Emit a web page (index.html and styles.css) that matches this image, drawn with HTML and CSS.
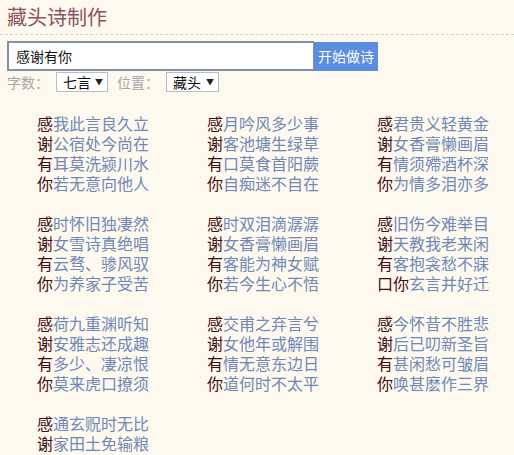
FILE: index.html
```html
<!DOCTYPE html>
<html lang="zh">
<head>
<meta charset="utf-8">
<title>藏头诗制作</title>
<link rel="stylesheet" href="styles.css">
</head>
<body>
<div class="page">
  <h1 class="title">藏头诗制作</h1>
  <div class="search">
    <input class="search-input" type="text" value="感谢有你">
    <button class="search-btn" type="button">开始做诗</button>
  </div>
  <div class="options">
    <span class="label">字数：</span>
    <span class="select sel-num">七言<span class="arrow">▼</span></span>
    <span class="label">位置：</span>
    <span class="select sel-pos">藏头<span class="arrow">▼</span></span>
  </div>
  <div class="poems">
    <div class="poem">
      <div><b>感</b>我此言良久立</div>
      <div><b>谢</b>公宿处今尚在</div>
      <div><b>有</b>耳莫洗颍川水</div>
      <div><b>你</b>若无意向他人</div>
    </div>
    <div class="poem">
      <div><b>感</b>月吟风多少事</div>
      <div><b>谢</b>客池塘生绿草</div>
      <div><b>有</b>口莫食首阳蕨</div>
      <div><b>你</b>自痴迷不自在</div>
    </div>
    <div class="poem">
      <div><b>感</b>君贵义轻黄金</div>
      <div><b>谢</b>女香膏懒画眉</div>
      <div><b>有</b>情须殢酒杯深</div>
      <div><b>你</b>为情多泪亦多</div>
    </div>
    <div class="poem">
      <div><b>感</b>时怀旧独凄然</div>
      <div><b>谢</b>女雪诗真绝唱</div>
      <div><b>有</b>云骛、骖风驭</div>
      <div><b>你</b>为养家子受苦</div>
    </div>
    <div class="poem">
      <div><b>感</b>时双泪滴潺潺</div>
      <div><b>谢</b>女香膏懒画眉</div>
      <div><b>有</b>客能为神女赋</div>
      <div><b>你</b>若今生心不悟</div>
    </div>
    <div class="poem">
      <div><b>感</b>旧伤今难举目</div>
      <div><b>谢</b>天教我老来闲</div>
      <div><b>有</b>客抱衾愁不寐</div>
      <div><b>口你</b>玄言并好迁</div>
    </div>
    <div class="poem">
      <div><b>感</b>荷九重渊听知</div>
      <div><b>谢</b>安雅志还成趣</div>
      <div><b>有</b>多少、凄凉恨</div>
      <div><b>你</b>莫来虎口撩须</div>
    </div>
    <div class="poem">
      <div><b>感</b>交甫之弃言兮</div>
      <div><b>谢</b>女他年或解围</div>
      <div><b>有</b>情无意东边日</div>
      <div><b>你</b>道何时不太平</div>
    </div>
    <div class="poem">
      <div><b>感</b>今怀昔不胜悲</div>
      <div><b>谢</b>后已叨新圣旨</div>
      <div><b>有</b>甚闲愁可皱眉</div>
      <div><b>你</b>唤甚麽作三界</div>
    </div>
    <div class="poem">
      <div><b>感</b>通玄贶时无比</div>
      <div><b>谢</b>家田土免输粮</div>
    </div>
  </div>
</div>
</body>
</html>
```

FILE: styles.css
```css
html, body {
  margin: 0;
  padding: 0;
  background: #fef9ee;
}
body {
  font-family: "Noto Sans CJK SC", "Noto Sans", sans-serif;
  color: #333;
}
.page {
  width: 514px;
  overflow: hidden;
}
.title {
  margin: 0;
  padding: 4px 0 0 7px;
  height: 35px;
  box-sizing: border-box;
  font-size: 20px;
  line-height: 26px;
  font-weight: normal;
  color: #8a5262;
  border-bottom: 1px dashed #d9d2c4;
}
.search {
  display: flex;
  align-items: flex-start;
  margin: 6px 0 0 7px;
  height: 30px;
}
.search-input {
  box-sizing: border-box;
  width: 307px;
  height: 30px;
  margin: 0;
  padding: 0 0 0 7px;
  border: 2px solid #8290a6;
  border-right-width: 1px;
  background: #fff;
  font-family: "Noto Sans CJK SC", sans-serif;
  font-size: 14px;
  color: #111;
  outline: none;
}
.search-btn {
  box-sizing: border-box;
  width: 64px;
  height: 29px;
  margin: 1px 0 0 0;
  padding: 0;
  border: none;
  background: #5b8de0;
  color: #fff;
  font-family: "Noto Sans CJK SC", sans-serif;
  font-size: 14px;
  line-height: 29px;
}
.options {
  display: flex;
  align-items: center;
  height: 22px;
  margin-left: 7px;
  font-size: 14px;
}
.label {
  color: #a6a6a6;
  width: 49px;
}
.label + .select + .label {
  margin-left: 9px;
}
.select {
  box-sizing: border-box;
  display: flex;
  align-items: center;
  justify-content: space-between;
  height: 20px;
  width: 52px;
  padding: 0 4px 0 6px;
  border: 1px solid #b8bcc4;
  background: #fff;
  color: #111;
  font-size: 14px;
  line-height: 18px;
}
.sel-pos {
  width: 53px;
}
.arrow {
  font-size: 8px;
  color: #222;
}
.poems {
  display: grid;
  grid-template-columns: 170px 170px 1fr;
  row-gap: 20px;
  padding: 20px 0 0 37px;
}
.poem {
  font-size: 16px;
  line-height: 20px;
  color: #6e88b8;
  white-space: nowrap;
}
.poem b {
  font-weight: normal;
  color: #3e0d12;
}
```
